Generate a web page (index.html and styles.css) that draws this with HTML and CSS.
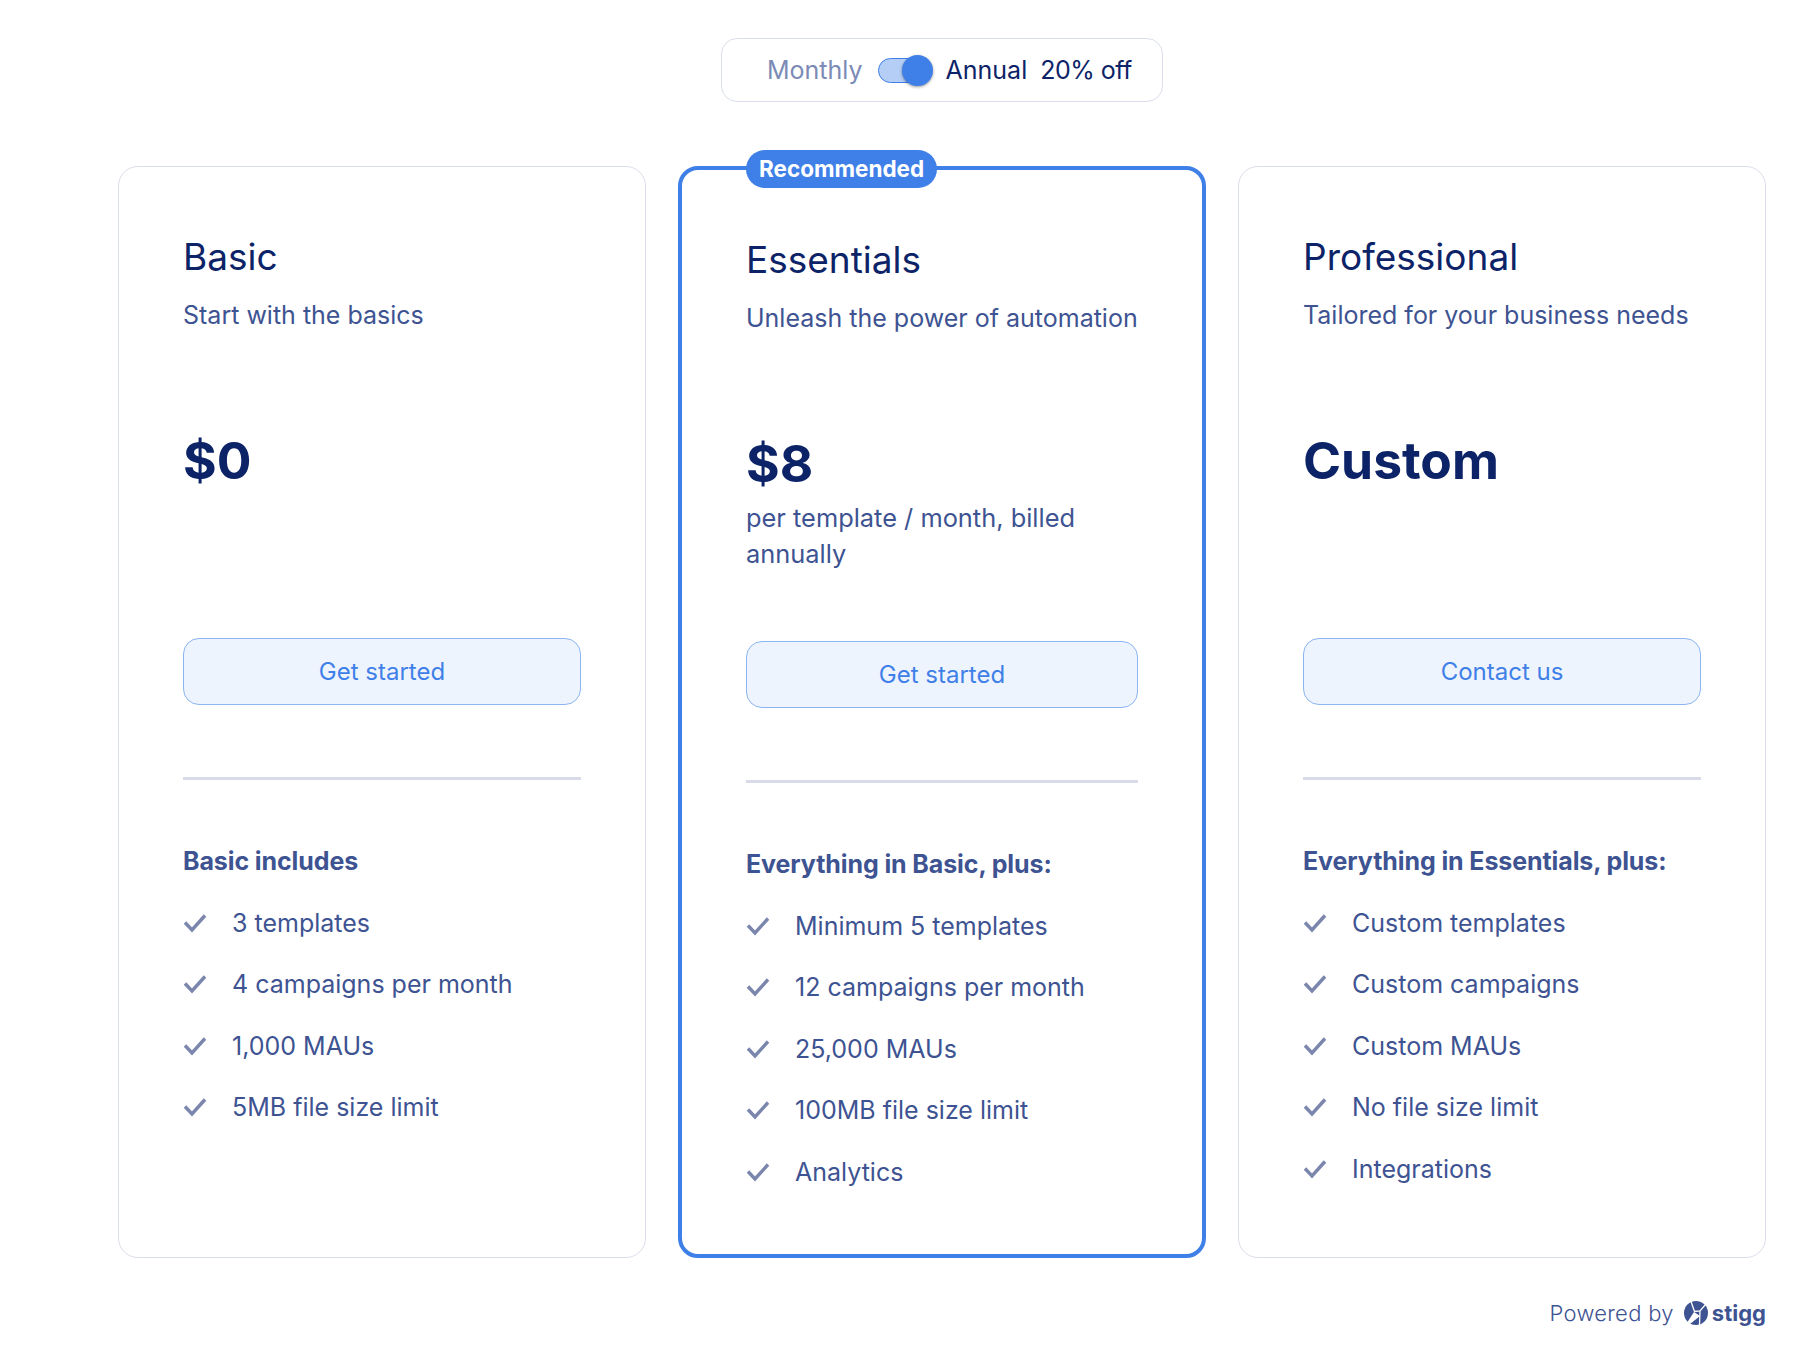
FILE: index.html
```html
<!DOCTYPE html>
<html lang="en">
<head>
    <meta charset="UTF-8">
    <title>Pricing</title>
    <link rel="stylesheet" href="styles.css">
</head>
<body>
    <div class="page">
        <div class="billing-toggle">
            <span class="billing-label muted">Monthly</span>
            <span class="switch"><span class="switch-thumb"></span></span>
            <span class="billing-label">Annual</span>
            <span class="billing-label discount">20% off</span>
        </div>

        <div class="plans">
            <section class="plan">
                <h2 class="plan-name">Basic</h2>
                <p class="plan-desc">Start with the basics</p>
                <div class="plan-price">
                    <div class="price">$0</div>
                </div>
                <button class="plan-button">Get started</button>
                <hr class="divider">
                <h3 class="features-title">Basic includes</h3>
                <ul class="features">
                    <li><svg class="check" viewBox="0 0 24 24"><path d="M2 11.5l7 7.5L22 4.5"/></svg>3 templates</li>
                    <li><svg class="check" viewBox="0 0 24 24"><path d="M2 11.5l7 7.5L22 4.5"/></svg>4 campaigns per month</li>
                    <li><svg class="check" viewBox="0 0 24 24"><path d="M2 11.5l7 7.5L22 4.5"/></svg>1,000 MAUs</li>
                    <li><svg class="check" viewBox="0 0 24 24"><path d="M2 11.5l7 7.5L22 4.5"/></svg>5MB file size limit</li>
                </ul>
            </section>

            <section class="plan recommended">
                <span class="badge">Recommended</span>
                <h2 class="plan-name">Essentials</h2>
                <p class="plan-desc">Unleash the power of automation</p>
                <div class="plan-price">
                    <div class="price">$8</div>
                    <p class="price-unit">per template / month, billed annually</p>
                </div>
                <button class="plan-button">Get started</button>
                <hr class="divider">
                <h3 class="features-title">Everything in Basic, plus:</h3>
                <ul class="features">
                    <li><svg class="check" viewBox="0 0 24 24"><path d="M2 11.5l7 7.5L22 4.5"/></svg>Minimum 5 templates</li>
                    <li><svg class="check" viewBox="0 0 24 24"><path d="M2 11.5l7 7.5L22 4.5"/></svg>12 campaigns per month</li>
                    <li><svg class="check" viewBox="0 0 24 24"><path d="M2 11.5l7 7.5L22 4.5"/></svg>25,000 MAUs</li>
                    <li><svg class="check" viewBox="0 0 24 24"><path d="M2 11.5l7 7.5L22 4.5"/></svg>100MB file size limit</li>
                    <li><svg class="check" viewBox="0 0 24 24"><path d="M2 11.5l7 7.5L22 4.5"/></svg>Analytics</li>
                </ul>
            </section>

            <section class="plan">
                <h2 class="plan-name">Professional</h2>
                <p class="plan-desc">Tailored for your business needs</p>
                <div class="plan-price">
                    <div class="price">Custom</div>
                </div>
                <button class="plan-button">Contact us</button>
                <hr class="divider">
                <h3 class="features-title">Everything in Essentials, plus:</h3>
                <ul class="features">
                    <li><svg class="check" viewBox="0 0 24 24"><path d="M2 11.5l7 7.5L22 4.5"/></svg>Custom templates</li>
                    <li><svg class="check" viewBox="0 0 24 24"><path d="M2 11.5l7 7.5L22 4.5"/></svg>Custom campaigns</li>
                    <li><svg class="check" viewBox="0 0 24 24"><path d="M2 11.5l7 7.5L22 4.5"/></svg>Custom MAUs</li>
                    <li><svg class="check" viewBox="0 0 24 24"><path d="M2 11.5l7 7.5L22 4.5"/></svg>No file size limit</li>
                    <li><svg class="check" viewBox="0 0 24 24"><path d="M2 11.5l7 7.5L22 4.5"/></svg>Integrations</li>
                </ul>
            </section>
        </div>

        <footer class="powered">
            <span class="powered-text">Powered by</span>
            <svg class="stigg-logo" viewBox="0 0 24 24">
                <circle cx="12" cy="12" r="12" fill="#3e5392"/>
                <path d="M7 0.5L10.5 10.5L16 10L21.5 3.5M16 10L15.5 24" stroke="#fff" stroke-width="1.3" fill="none"/>
                <path d="M3.5 21L10 11L16 15L6 23Z" fill="#fff"/>
            </svg>
            <span class="stigg-name">stigg</span>
        </footer>
    </div>
</body>
</html>
```

FILE: styles.css
```css
* {
    box-sizing: border-box;
}

body {
    margin: 0;
    background: #fff;
    font-family: "Inter", "Noto Sans", sans-serif;
    color: #3e5392;
}

.page {
    padding: 38px 50px 0 118px;
}

.billing-toggle {
    display: flex;
    align-items: center;
    width: 442px;
    height: 64px;
    margin: 0 auto;
    padding-left: 45px;
    border: 1px solid #d9deea;
    border-radius: 16px;
}

.billing-label {
    font-size: 25px;
    color: #0d2368;
    margin-right: 13px;
}

.billing-label.muted {
    color: #7b8bb5;
    margin-right: 15px;
}

.billing-label.discount {
    letter-spacing: -0.5px;
}

.switch {
    position: relative;
    width: 54px;
    height: 25px;
    margin-right: 14px;
    border: 1px solid #3f80e8;
    border-radius: 13px;
    background: #b4cef6;
}

.switch-thumb {
    position: absolute;
    top: -4px;
    right: -2px;
    width: 31px;
    height: 31px;
    border-radius: 50%;
    background: #3f80e8;
    box-shadow: 0 1px 3px rgba(0, 0, 0, 0.4);
}

.plans {
    display: grid;
    grid-template-columns: repeat(3, 528px);
    gap: 32px;
    margin-top: 64px;
}

.plan {
    position: relative;
    height: 1092px;
    padding: 65px 64px 64px;
    border: 1px solid #d9deea;
    border-radius: 20px;
}

.plan.recommended {
    border: 4px solid #3f80e8;
}

.badge {
    position: absolute;
    top: -20px;
    left: 64px;
    height: 38px;
    padding: 0 13px;
    border-radius: 19px;
    background: #3f80e8;
    color: #fff;
    font-size: 22.5px;
    font-weight: 700;
    line-height: 38px;
}

.plan-name {
    margin: 0;
    font-size: 37px;
    font-weight: 400;
    line-height: 50px;
    color: #0d2368;
}

.plan-desc {
    margin: 15px 0 0;
    font-size: 25px;
    line-height: 36px;
}

.plan-price {
    height: 214px;
    margin-top: 91px;
}

.price {
    font-size: 51.5px;
    font-weight: 700;
    line-height: 72px;
    color: #0d2368;
}

.price-unit {
    margin: 1px 0 0;
    font-size: 25.4px;
    line-height: 36px;
}

.plan-button {
    display: block;
    width: 100%;
    height: 67px;
    border: 1px solid #8cb5f2;
    border-radius: 16px;
    background: #eef4fe;
    color: #3f80e8;
    font-family: inherit;
    font-size: 24px;
}

.divider {
    height: 3px;
    margin: 72px 0 0;
    border: none;
    background: #d9dce8;
}

.features-title {
    margin: 63px 0 0;
    font-size: 25px;
    font-weight: 700;
    line-height: 36px;
    letter-spacing: -0.1px;
}

.features {
    display: flex;
    flex-direction: column;
    gap: 25.4px;
    margin: 26px 0 0;
    padding: 0;
    list-style: none;
}

.features li {
    display: flex;
    align-items: center;
    gap: 25px;
    font-size: 25px;
    line-height: 36px;
}

.check {
    width: 24px;
    height: 24px;
    flex: none;
    fill: none;
    stroke: #7b86ad;
    stroke-width: 3.4;
}

.powered {
    display: flex;
    align-items: center;
    justify-content: flex-end;
    height: 30px;
    margin-top: 40px;
}

.powered-text {
    font-size: 22px;
    font-weight: 300;
    letter-spacing: 0.3px;
    margin-right: 10px;
}

.stigg-logo {
    width: 24px;
    height: 24px;
    margin-right: 4px;
}

.stigg-name {
    font-size: 22px;
    font-weight: 700;
}
```
